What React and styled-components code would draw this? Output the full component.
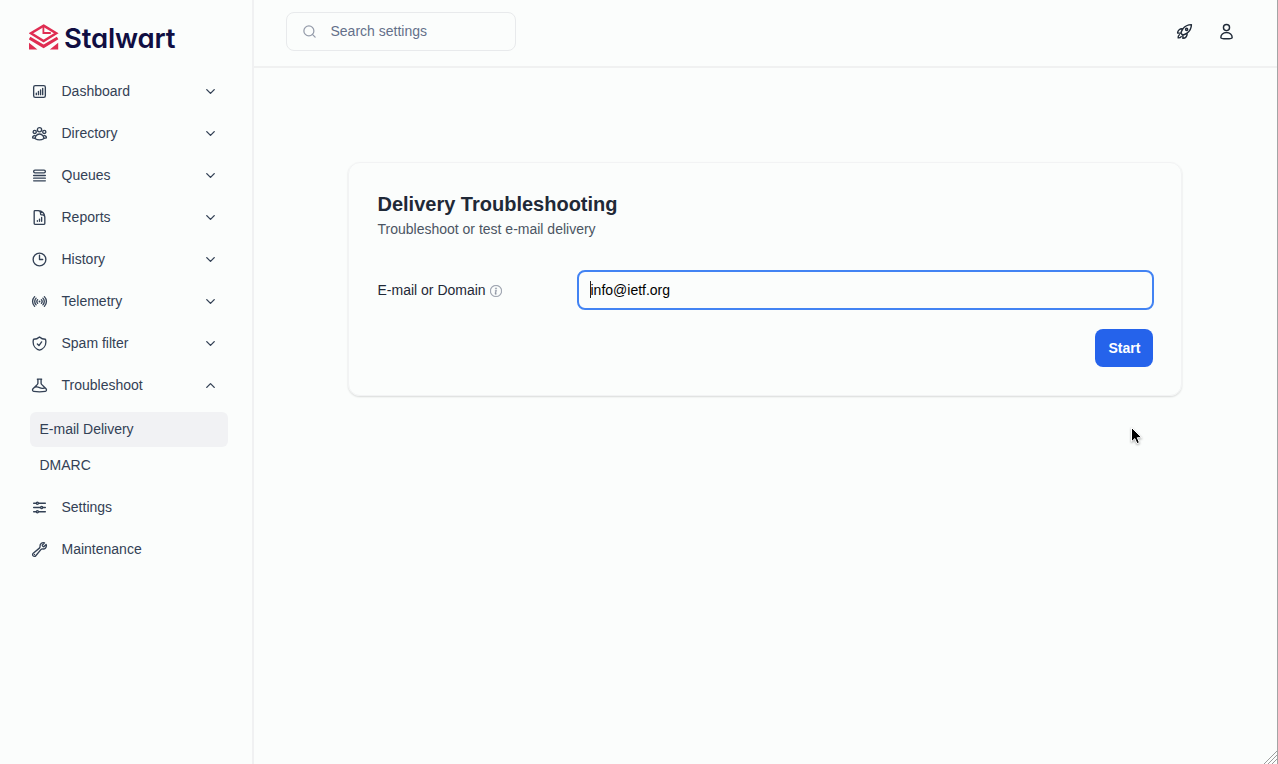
import React from 'react';
import styled, { createGlobalStyle, css } from 'styled-components';
import {
  HiOutlineChartBarSquare, HiOutlineUserGroup, HiOutlineQueueList, HiOutlineDocumentChartBar,
  HiOutlineClock, HiOutlineSignal, HiOutlineShieldCheck, HiOutlineBeaker,
  HiOutlineAdjustmentsHorizontal, HiOutlineWrench, HiOutlineRocketLaunch,
} from 'react-icons/hi2';
import { ChevronDown, ChevronUp, Search } from 'lucide-react';

const GlobalStyle = createGlobalStyle`
  *, *::before, *::after { box-sizing: border-box; }
  body { margin: 0; background: #fbfdfc; overflow: hidden; }
  button, input { font: inherit; }
`;

const Page = styled.div`
  position: relative;
  display: grid;
  grid-template-columns: 254px 1fr;
  width: 100%;
  height: 764px;
  background: #fbfdfc;
  border-right: 1px solid #a3a5a5;
  font-family: "Liberation Sans", Helvetica, Arial, sans-serif;
  font-size: 14px;
  color: #334155;
`;

const Sidebar = styled.aside`
  border-right: 2px solid #f0f1f2;
  padding: 21px 24px 0 22px;
`;

const Brand = styled.div`
  display: flex;
  align-items: flex-start;
  height: 49px;
  padding-left: 7px;
`;

const BrandMark = styled.svg`
  width: 30px;
  height: 26px;
  margin-top: 3px;
  flex: none;
`;

const BrandName = styled.span`
  margin-left: 5px;
  font-family: Inter, sans-serif;
  font-feature-settings: "cv11";
  font-size: 27.5px;
  font-weight: 600;
  line-height: 35px;
  letter-spacing: -0.15px;
  color: #100e42;
`;

const Nav = styled.nav`
  display: flex;
  flex-direction: column;
`;

const NavItem = styled.a`
  display: flex;
  align-items: center;
  height: 42px;
  padding: 0 10px 0 9px;

  & > svg:first-child {
    width: 17px;
    height: 17px;
    margin-top: 1px;
    flex: none;
    stroke-width: 1.9;
  }
`;

const NavLabel = styled.span`
  flex: 1;
  margin-left: 13.5px;
  padding-bottom: 1px;
`;

const chevron = css`
  width: 15px;
  height: 15px;
  margin-top: 1px;
  stroke-width: 2.2;
`;
const Down = styled(ChevronDown)`${chevron}`;
const Up = styled(ChevronUp)`${chevron}`;

const SubNav = styled.div`
  display: flex;
  flex-direction: column;
  gap: 1px;
  padding: 6px 0 4px 8px;
`;

const SubItem = styled.a`
  display: flex;
  align-items: center;
  height: ${p => (p.$active ? 35 : 34)}px;
  padding: 0 9.5px 1px;
  border-radius: 6px;
  background: ${p => (p.$active ? '#f1f2f4' : 'transparent')};
`;

const Main = styled.div`
  display: flex;
  flex-direction: column;
`;

const TopBar = styled.header`
  display: flex;
  align-items: flex-start;
  justify-content: space-between;
  height: 68px;
  padding: 12px 42px 0 32px;
  border-bottom: 2px solid #f0f1f1;
`;

const SearchBox = styled.div`
  display: flex;
  align-items: center;
  gap: 13.5px;
  width: 230px;
  height: 39px;
  padding: 0 15px 2px;
  border: 1px solid #e8eaec;
  border-radius: 8px;
  color: #64708a;
`;

const SearchIcon = styled(Search)`
  width: 15px;
  height: 15px;
  margin-top: 2px;
  color: #959caa;
`;

const Actions = styled.div`
  display: flex;
  gap: 25px;
  padding-top: 11px;
  color: #1f2937;

  svg { width: 17px; height: 17px; stroke-width: 2; }
`;

const UserIcon = styled.svg`
  fill: none;
  stroke: currentColor;
`;

const Card = styled.section`
  width: 834px;
  height: 234px;
  margin: 94px 0 0 94.49px;
  padding: 29px 28px 0 28px;
  border: 1px solid #f2f3f4;
  border-radius: 12px;
  box-shadow: 0 1px 2px rgba(0, 0, 0, 0.14);
`;

const Title = styled.h1`
  margin: 0;
  font-size: 20px;
  line-height: 24px;
  font-weight: 700;
  color: #1f2937;
`;

const Subtitle = styled.p`
  margin: 3px 0 0;
  line-height: 20px;
  color: #4b5563;
`;

const Field = styled.label`
  display: grid;
  grid-template-columns: 199.5px 1fr;
  align-items: center;
  margin: 31.4px -0.5px 0 0;
  color: #1f2937;
`;

const FieldLabel = styled.span`
  display: flex;
  align-items: center;
  gap: 4px;

  svg { width: 12px; height: 12px; margin-top: 1px; }
`;

const Input = styled.div`
  display: flex;
  align-items: center;
  height: 40px;
  padding: 0 11.5px 1px;
  border: 2px solid #4283f3;
  border-radius: 8px;
  color: #000;
`;

const Caret = styled.span`
  width: 1px;
  height: 17px;
  margin-right: -1px;
  background: #222;
`;

const ButtonRow = styled.div`
  display: flex;
  justify-content: flex-end;
  margin-top: 19px;
`;

const PrimaryButton = styled.button`
  width: 58px;
  height: 38px;
  padding: 0 0 1px;
  border: 0;
  border-radius: 8px;
  background: #2563eb;
  color: #fff;
  font-weight: 700;
`;

const Pointer = styled.svg`
  position: absolute;
  left: 1128px;
  top: 425px;
  width: 16px;
  height: 21px;
  filter: drop-shadow(0 1px 1px rgba(0, 0, 0, 0.35));
`;

const ResizeGrip = styled.svg`
  position: absolute;
  right: 0;
  bottom: 0;
  width: 14px;
  height: 14px;
`;

const sections = [
  ['Dashboard', HiOutlineChartBarSquare],
  ['Directory', HiOutlineUserGroup],
  ['Queues', HiOutlineQueueList],
  ['Reports', HiOutlineDocumentChartBar],
  ['History', HiOutlineClock],
  ['Telemetry', HiOutlineSignal],
  ['Spam filter', HiOutlineShieldCheck],
  ['Troubleshoot', HiOutlineBeaker],
];

export default function App() {
  return (
    <Page>
      <GlobalStyle />
      <Sidebar>
        <Brand>
          <BrandMark viewBox="0 0 30 26" fill="none" stroke="#df2d52" strokeWidth="2.5">
            <path d="M14.6 1.6 27.2 9.3 14.6 17 2 9.3Z" />
            <path d="M14.4 3v6h7.4" strokeWidth="1.8" />
            <path d="M.6 14 14.6 22.4l14-8.4" strokeWidth="3" />
            <path d="M0 18.8v6.600h8.400ZM29.200 18.800v6.600h-8.400Z" fill="#df2d52" stroke="none" />
          </BrandMark>
          <BrandName>Stalwart</BrandName>
        </Brand>
        <Nav>
          {sections.map(([label, Icon]) => (
            <NavItem key={label}>
              <Icon />
              <NavLabel>{label}</NavLabel>
              {label === 'Troubleshoot' ? <Up /> : <Down />}
            </NavItem>
          ))}
          <SubNav>
            <SubItem $active>E-mail Delivery</SubItem>
            <SubItem>DMARC</SubItem>
          </SubNav>
          <NavItem><HiOutlineAdjustmentsHorizontal /><NavLabel>Settings</NavLabel></NavItem>
          <NavItem><HiOutlineWrench /><NavLabel>Maintenance</NavLabel></NavItem>
        </Nav>
      </Sidebar>
      <Main>
        <TopBar>
          <SearchBox><SearchIcon /><span>Search settings</span></SearchBox>
          <Actions>
            <HiOutlineRocketLaunch />
            <UserIcon viewBox="0 0 24 24">
              <circle cx="12" cy="6.5" r="4.3" />
              <path d="M12 13.3c-4.8 0-8 3.4-8 7 0 1.4 3.5 2 8 2s8-.6 8-2c0-3.6-3.2-7-8-7Z" />
            </UserIcon>
          </Actions>
        </TopBar>
        <Card>
          <Title>Delivery Troubleshooting</Title>
          <Subtitle>Troubleshoot or test e-mail delivery</Subtitle>
          <Field>
            <FieldLabel>
              E-mail or Domain
              <svg viewBox="0 0 16 16" fill="#9298a5" stroke="#9298a5" strokeWidth=".4">
                <path d="M8 15A7 7 0 1 1 8 1a7 7 0 0 1 0 14m0 1A8 8 0 1 0 8 0a8 8 0 0 0 0 16" />
                <path d="m8.93 6.588-2.29.287-.082.38.45.083c.294.07.352.176.288.469l-.738 3.468c-.194.897.105 1.319.808 1.319.545 0 1.178-.252 1.465-.598l.088-.416c-.2.176-.492.246-.686.246-.275 0-.375-.193-.304-.533zM9 4.5a1 1 0 1 1-2 0 1 1 0 0 1 2 0" />
              </svg>
            </FieldLabel>
            <Input><Caret />info@ietf.org</Input>
          </Field>
          <ButtonRow><PrimaryButton>Start</PrimaryButton></ButtonRow>
        </Card>
      </Main>
      <Pointer viewBox="0 0 16 21">
        <path d="M3.5 2.5v14.2l3.3-3.1 2.2 5 2.4-1-2.1-4.9h4.5Z" fill="#000" stroke="#fff" />
      </Pointer>
      <ResizeGrip viewBox="0 0 14 14" stroke="#9b9d9d" fill="none">
        <path d="M1 14 14 1M5 14l9-9M9 14l5-5" />
      </ResizeGrip>
    </Page>
  );
}
